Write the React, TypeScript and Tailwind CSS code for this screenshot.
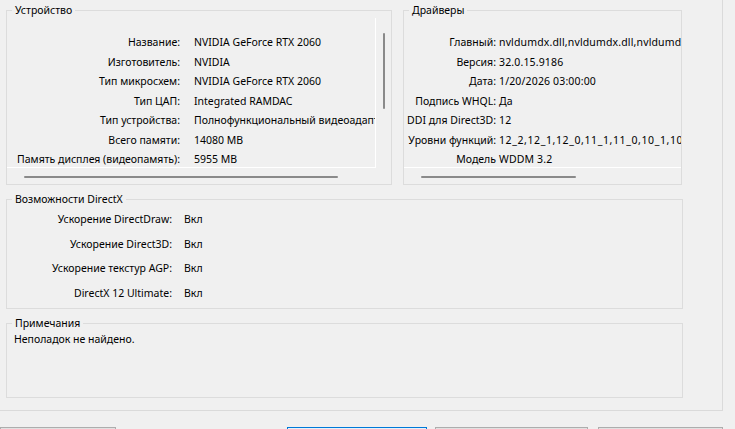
import React from 'react';

type Row = [string, string];

const deviceRows: Row[] = [
  ['Название:', 'NVIDIA GeForce RTX 2060'],
  ['Изготовитель:', 'NVIDIA'],
  ['Тип микросхем:', 'NVIDIA GeForce RTX 2060'],
  ['Тип ЦАП:', 'Integrated RAMDAC'],
  ['Тип устройства:', 'Полнофункциональный видеоадаптер'],
  ['Всего памяти:', '14080 MB'],
  ['Память дисплея (видеопамять):', '5955 MB'],
];

const driverRows: Row[] = [
  ['Главный:', 'nvldumdx.dll,nvldumdx.dll,nvldumdx.dll,nvldumdx.dll'],
  ['Версия:', '32.0.15.9186'],
  ['Дата:', '1/20/2026 03:00:00'],
  ['Подпись WHQL:', 'Да'],
  ['DDI для Direct3D:', '12'],
  ['Уровни функций:', '12_2,12_1,12_0,11_1,11_0,10_1,10_0,9_3,9_2,9_1'],
  ['Модель', 'WDDM 3.2'],
];

const featureRows: Row[] = [
  ['Ускорение DirectDraw:', 'Вкл'],
  ['Ускорение Direct3D:', 'Вкл'],
  ['Ускорение текстур AGP:', 'Вкл'],
  ['DirectX 12 Ultimate:', 'Вкл'],
];

const GroupBox: React.FC<{ title: string; className: string; children: React.ReactNode }> = ({
  title,
  className,
  children,
}) => (
  <fieldset className={`min-w-0 border border-[#dcdcdc] ${className}`}>
    <legend className="ml-[5px] px-[3px] leading-[16px]">{title}</legend>
    {children}
  </fieldset>
);

export default function App() {
  return (
    <div className="w-[735px] h-[429px] overflow-hidden bg-[#f0f0f0] font-['Noto_Sans',sans-serif] text-[10.5px] text-black">
      <div className="w-[723px] h-[411px] border-r border-b border-[#dadada] pl-[6px] pt-[2px]">
        <div className="flex gap-[11px]">
          <GroupBox title="Устройство" className="w-[386px] h-[183px]">
            <div className="flex">
              <div className="w-[369px] h-[150px] overflow-hidden border-r border-b border-white pt-[15px]">
                <div className="grid grid-cols-[173px_auto] gap-x-[14px] leading-[19.5px] whitespace-nowrap">
                  {deviceRows.map(([k, v]) => (
                    <React.Fragment key={k}>
                      <div className="text-right">{k}</div>
                      <div>{v}</div>
                    </React.Fragment>
                  ))}
                </div>
              </div>
              <div className="flex-1">
                <div className="ml-[7px] mt-[15px] w-[2px] h-[76px] rounded-full bg-[#8a8a8a]" />
              </div>
            </div>
            <div className="h-[16px] pt-[8px]">
              <div className="ml-[17px] w-[314px] h-[2px] rounded-full bg-[#8a8a8a]" />
            </div>
          </GroupBox>

          <GroupBox title="Драйверы" className="w-[279px] h-[183px]">
            <div className="h-[150px] overflow-hidden border-b border-white pt-[15px]">
              <div className="grid grid-cols-[92px_auto] gap-x-[3px] leading-[19.5px] whitespace-nowrap">
                {driverRows.map(([k, v]) => (
                  <React.Fragment key={k}>
                    <div className="text-right">{k}</div>
                    <div className={k === 'Уровни функций:' ? 'tracking-[0.6px]' : 'tracking-[0.15px]'}>{v}</div>
                  </React.Fragment>
                ))}
              </div>
            </div>
            <div className="h-[16px] pt-[8px]">
              <div className="ml-[17px] w-[155px] h-[2px] rounded-full bg-[#8a8a8a]" />
            </div>
          </GroupBox>
        </div>

        <GroupBox title="Возможности DirectX" className="mt-[6px] w-[677px] h-[118px]">
          <div className="grid grid-cols-[165px_auto] gap-x-[12px] leading-[24.5px] whitespace-nowrap">
            {featureRows.map(([k, v]) => (
              <React.Fragment key={k}>
                <div className="text-right">{k}</div>
                <div>{v}</div>
              </React.Fragment>
            ))}
          </div>
        </GroupBox>

        <GroupBox title="Примечания" className="mt-[6px] w-[677px] h-[83px]">
          <div className="pl-[7px] leading-[16px]">Неполадок не найдено.</div>
        </GroupBox>
      </div>

      <div className="flex mt-[16px]">
        <button className="w-[116px] h-[23px] border border-[#adadad] bg-[#e1e1e1]" />
        <button className="ml-[171px] w-[140px] h-[23px] border border-[#0078d7] bg-[#e5f1fb]" />
        <button className="ml-[8px] w-[153px] h-[23px] border border-[#adadad] bg-[#e1e1e1]" />
        <button className="ml-[10px] w-[125px] h-[23px] border border-[#adadad] bg-[#e1e1e1]" />
      </div>
    </div>
  );
}
